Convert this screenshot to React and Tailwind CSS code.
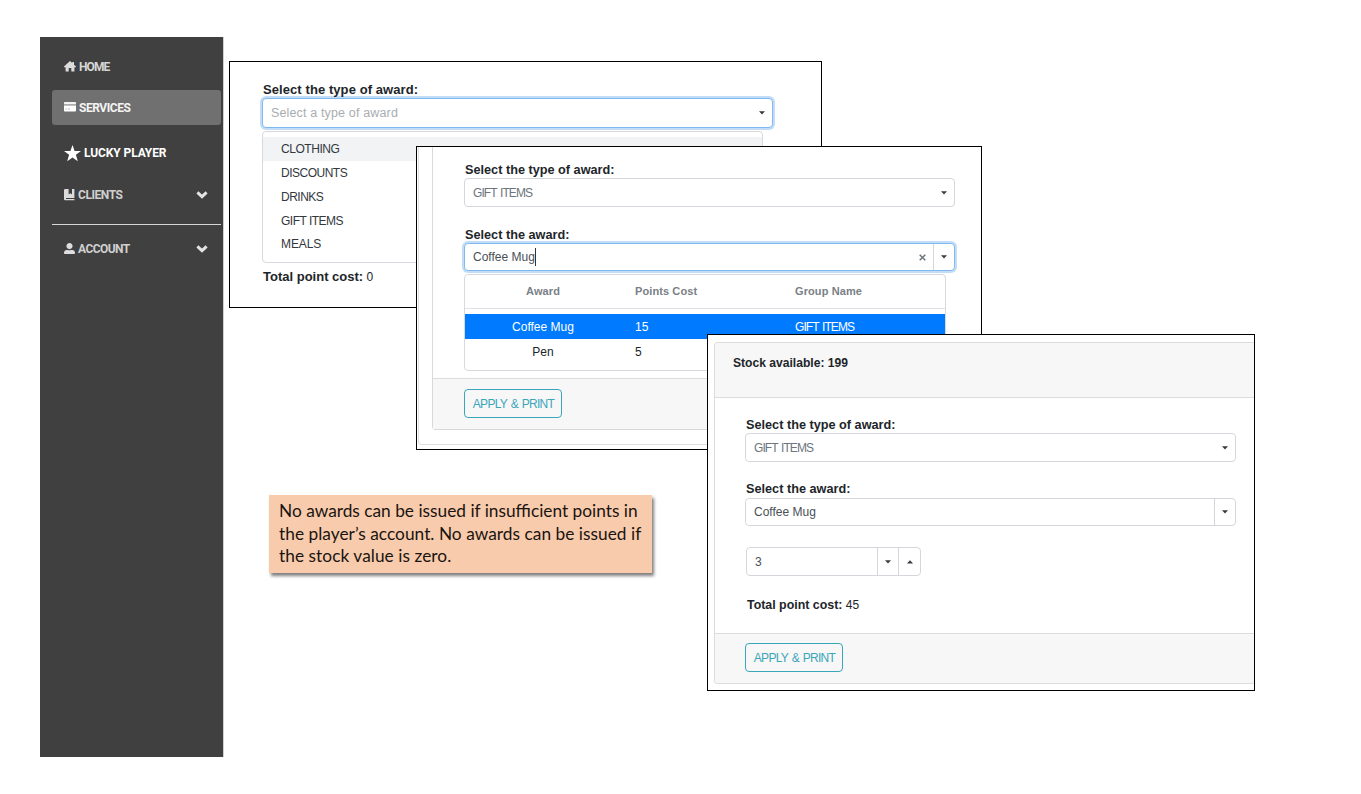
import React from 'react';
import { FaUserAlt } from 'react-icons/fa';

function HomeIcon() {
  return (
    <svg width="12" height="11" viewBox="0 0 12 11" className="block">
      <path d="M6 0L8.3 2.1V1H10v2.7L12 5.6V6.2H10.4V10.5H7.3V7H4.7v3.5H1.6V6.2H0V5.6z" fill="#dcdcdc" />
    </svg>
  );
}

function CardIcon() {
  return (
    <svg width="12" height="10" viewBox="0 0 12 10" className="block">
      <path d="M0 .8A.8.8 0 0 1 .8 0h10.4a.8.8 0 0 1 .8.8V2.4H0z" fill="#f2f2f2" />
      <path d="M0 2.4h12v1H0z" fill="#a8a8a8" />
      <path d="M0 3.4h12v5.3a.8.8 0 0 1-.8.8H.8a.8.8 0 0 1-.8-.8z" fill="#fff" />
      <path d="M1.5 7H3M4 7h2" stroke="#aaa" strokeWidth=".8" />
    </svg>
  );
}

function StarIcon() {
  return (
    <svg width="17" height="17" viewBox="0 0 17 17" className="block">
      <path d="M8.5 0L10.6 6H17L11.9 9.8L13.8 16.2L8.5 12.4L3.2 16.2L5.1 9.8L0 6H6.4z" fill="#fff" />
    </svg>
  );
}

function BookIcon() {
  return (
    <svg width="11" height="12" viewBox="0 0 11 12" className="block">
      <path d="M1.3 0H4.6v5.6l1.7-1.4L8 5.6V0H10.4v9H2v1.1h8.4V11.3H1.3A1.3 1.3 0 0 1 0 10V1.3A1.3 1.3 0 0 1 1.3 0z" fill="#dcdcdc" />
    </svg>
  );
}

function Chevron() {
  return (
    <svg width="12" height="8" viewBox="0 0 12 8" className="mr-[15px] ml-auto block">
      <path d="M1.4 1.4L6 5.6L10.6 1.4" fill="none" stroke="#e4e4e4" strokeWidth="3" />
    </svg>
  );
}

function Caret({ up }) {
  return (
    <svg width="6" height="4" viewBox="0 0 6 4" className="block shrink-0">
      <path d={up ? 'M0 3.5L3 .3L6 3.5z' : 'M0 .3H6L3 3.5z'} fill="#343a40" />
    </svg>
  );
}

function NavItem({ icon, label, className, chevron }) {
  return (
    <div className={`flex items-center whitespace-nowrap pl-3 text-[12px] leading-none font-bold ${className}`}>
      {icon}
      {label}
      {chevron && <Chevron />}
    </div>
  );
}

function Sidebar() {
  return (
    <aside className="flex h-[720px] w-[184px] flex-col border-r border-[#d0d0d0] bg-[#404040] pt-3 pl-3 font-[Roboto,sans-serif]">
      <NavItem
        icon={<span className="mr-[3px] mb-px"><HomeIcon /></span>}
        label={<span className="tracking-[-0.9px]">HOME</span>}
        className="h-9 text-[#d6d6d6]"
      />
      <NavItem
        icon={<span className="mr-[3px] mb-[2px]"><CardIcon /></span>}
        label={<span className="tracking-[-0.45px]">SERVICES</span>}
        className="mt-[5px] h-[35px] w-[169px] rounded-[3px] bg-[#707070] text-[#f4f4f4]"
      />
      <NavItem
        icon={<span className="mr-[3px]"><StarIcon /></span>}
        label={<span className="tracking-[-0.1px]">LUCKY PLAYER</span>}
        className="mt-[10px] h-9 text-white"
      />
      <NavItem
        icon={<span className="mr-[3px] mb-px"><BookIcon /></span>}
        label={<span className="tracking-[-0.45px]">CLIENTS</span>}
        className="mt-[6px] h-9 text-[#d0d0d0]"
        chevron
      />
      <hr className="mt-[11px] w-[169px] border-[#d6d6d6]" />
      <NavItem
        icon={<FaUserAlt size={11} className="mr-[3px] mb-px text-[#dedede]" />}
        label={<span className="tracking-[-0.55px]">ACCOUNT</span>}
        className="mt-[6px] h-9 text-[#d0d0d0]"
        chevron
      />
    </aside>
  );
}

function Label({ children, className = 'text-[12.7px]' }) {
  return <div className={`h-4 whitespace-nowrap pl-px leading-4 font-bold text-[#212529] ${className}`}>{children}</div>;
}

function SelectBox({ children, className, split, clear, focus }) {
  return (
    <div
      className={`flex items-center rounded border bg-white pl-2 text-[12px] whitespace-nowrap ${
        focus ? 'border-[#7fb9f0] shadow-[0_0_0_2px_#c3ddf8]' : 'border-[#d3d7db]'
      } ${className}`}
    >
      {children}
      <div className="ml-auto flex h-full items-center">
        {clear && (
          <svg width="7" height="7" viewBox="0 0 7 7" className="mr-[7px]">
            <path d="M.7.7l5.6 5.6M6.3.7L.7 6.3" stroke="#6c757d" strokeWidth="1.5" />
          </svg>
        )}
        <div className={`flex h-full w-[21px] items-center justify-center ${split ? 'border-l border-[#d3d7db]' : ''}`}>
          <Caret />
        </div>
      </div>
    </div>
  );
}

function ApplyButton() {
  return (
    <button className="block h-[29px] w-[98px] rounded border border-[#3aa6b9] pl-px text-[12px] tracking-[-0.7px] [word-spacing:1.1px] whitespace-nowrap text-[#3aa6b9]">
      APPLY &amp; PRINT
    </button>
  );
}

function AwardTypePanel() {
  return (
    <section className="absolute top-[61px] left-[229px] h-[247px] w-[593px] border border-black bg-white pt-5 pl-8">
      <Label className="text-[13px] tracking-[0.08px]">Select the type of award:</Label>
      <SelectBox focus className="h-[30px] w-[511px]">
        <span className="text-[12.5px] tracking-[0.15px] text-[#a9adb1]">Select a type of award</span>
      </SelectBox>
      <ul className="mt-[3px] h-[132px] w-[501px] rounded border border-[#d6dade] pt-[5px] text-[12px] leading-6 text-[#33383d]">
        <li className="h-6 bg-[#f1f3f5] pl-[18px] tracking-[-0.45px]">CLOTHING</li>
        <li className="h-6 pl-[18px] tracking-[-0.5px]">DISCOUNTS</li>
        <li className="h-6 pl-[18px] tracking-[-0.5px]">DRINKS</li>
        <li className="h-6 pl-[18px] tracking-[-0.5px]">GIFT ITEMS</li>
        <li className="h-6 pl-[18px] leading-[23px] tracking-[-0.1px]">MEALS</li>
      </ul>
      <div className="mt-[6px] pl-px text-[12px] leading-4 text-[#212529]">
        <b className="text-[13px]">Total point cost:</b> 0
      </div>
    </section>
  );
}

function AwardPanel() {
  return (
    <section className="absolute top-[146px] left-[416px] h-[304px] w-[566px] overflow-hidden border border-black bg-white pl-px">
      <div className="h-[298px] rounded-bl border-b border-l border-[#dfdfdf] pl-[13px]">
        <div className="flex h-[283px] flex-col rounded-bl border-b border-l border-[#d9d9d9]">
          <div className="h-[231px] pt-[15px] pl-[31px]">
            <Label>Select the type of award:</Label>
            <SelectBox className="h-[29px] w-[491px]">
              <span className="tracking-[-0.9px] [word-spacing:1px] text-[#6c757d]">GIFT ITEMS</span>
            </SelectBox>
            <Label className="mt-5 text-[12.7px]">Select the award:</Label>
            <SelectBox focus split clear className="h-[28px] w-[491px]">
              <span className="border-r border-[#333] text-[#495057]">Coffee Mug</span>
            </SelectBox>
            <div className="mt-[3px] h-[97px] w-[482px] rounded border border-[#d6dade] bg-white">
              <div className="grid h-[34px] grid-cols-[156px_160px_1fr] items-center border-b border-[#dee2e6] text-[11px] font-bold tracking-[0.1px] text-[#7a8087]">
                <span className="text-center">Award</span>
                <span className="pl-[14px]">Points Cost</span>
                <span className="pl-[14px]">Group Name</span>
              </div>
              <div className="mt-[5px] grid h-[25px] grid-cols-[156px_160px_1fr] items-center bg-[#007bff] text-[12px] text-white">
                <span className="text-center">Coffee Mug</span>
                <span className="pl-[14px]">15</span>
                <span className="pl-[14px] tracking-[-0.9px] [word-spacing:1px]">GIFT ITEMS</span>
              </div>
              <div className="grid h-[26px] grid-cols-[156px_160px_1fr] items-center text-[12px] text-[#212529]">
                <span className="text-center">Pen</span>
                <span className="pl-[14px]">5</span>
              </div>
            </div>
          </div>
          <div className="flex-1 border-t border-[#dcdcdc] bg-[#f7f7f7] pt-[10px] pl-[31px]">
            <ApplyButton />
          </div>
        </div>
      </div>
    </section>
  );
}

function StockPanel() {
  return (
    <section className="absolute top-[334px] left-[707px] h-[357px] w-[548px] overflow-hidden border border-black bg-white pt-[7px] pl-[6px]">
      <div className="flex h-[342px] flex-col overflow-hidden rounded-l border-y border-l border-[#dcdcdc]">
        <div className="h-[55px] border-b border-[#dcdcdc] bg-[#f7f7f7] pt-[12px] pl-[17px]">
          <Label className="text-[12.1px]">Stock available: 199</Label>
        </div>
        <div className="flex-1 pt-[19px] pl-[30px]">
          <Label>Select the type of award:</Label>
          <SelectBox className="h-[29px] w-[491px]">
            <span className="tracking-[-0.9px] [word-spacing:1px] text-[#6c757d]">GIFT ITEMS</span>
          </SelectBox>
          <Label className="mt-[19px] text-[12.7px]">Select the award:</Label>
          <SelectBox split className="mt-px h-[28px] w-[491px]">
            <span className="text-[#495057]">Coffee Mug</span>
          </SelectBox>
          <div className="mt-[21px] ml-px flex h-[29px] w-[175px] items-center rounded border border-[#d3d7db] pl-2 text-[12px] text-[#495057]">
            3
            <div className="ml-auto flex h-full w-[21px] items-center justify-center border-l border-[#d3d7db]">
              <Caret />
            </div>
            <div className="flex h-full w-[22px] items-center justify-center border-l border-[#d3d7db]">
              <Caret up />
            </div>
          </div>
          <div className="mt-[21px] pl-[2px] text-[12px] leading-4 text-[#212529]">
            <b className="text-[12.4px]">Total point cost:</b> 45
          </div>
        </div>
        <div className="h-[50px] border-t border-[#dcdcdc] bg-[#f7f7f7] pt-[9px] pl-[30px]">
          <ApplyButton />
        </div>
      </div>
    </section>
  );
}

function Note() {
  return (
    <p className="absolute top-[495px] left-[269px] flex h-[78px] w-[383px] flex-col bg-[#f8cbad] pt-[5px] pl-[10px] font-[Lato,sans-serif] text-[17.3px] leading-[22.6px] whitespace-nowrap text-[#1a1410] shadow-[2px_3px_3px_rgba(0,0,0,0.5)]">
      <span>No awards can be issued if insufficient points in</span>
      <span className="tracking-[0.03px]">the player’s account. No awards can be issued if</span>
      <span className="tracking-[0.05px]">the stock value is zero.</span>
    </p>
  );
}

export default function App() {
  return (
    <main className="relative h-[794px] w-[1361px] overflow-hidden bg-white pt-[37px] pl-10 font-['Liberation_Sans',Arial,sans-serif]">
      <Sidebar />
      <AwardTypePanel />
      <AwardPanel />
      <StockPanel />
      <Note />
    </main>
  );
}
